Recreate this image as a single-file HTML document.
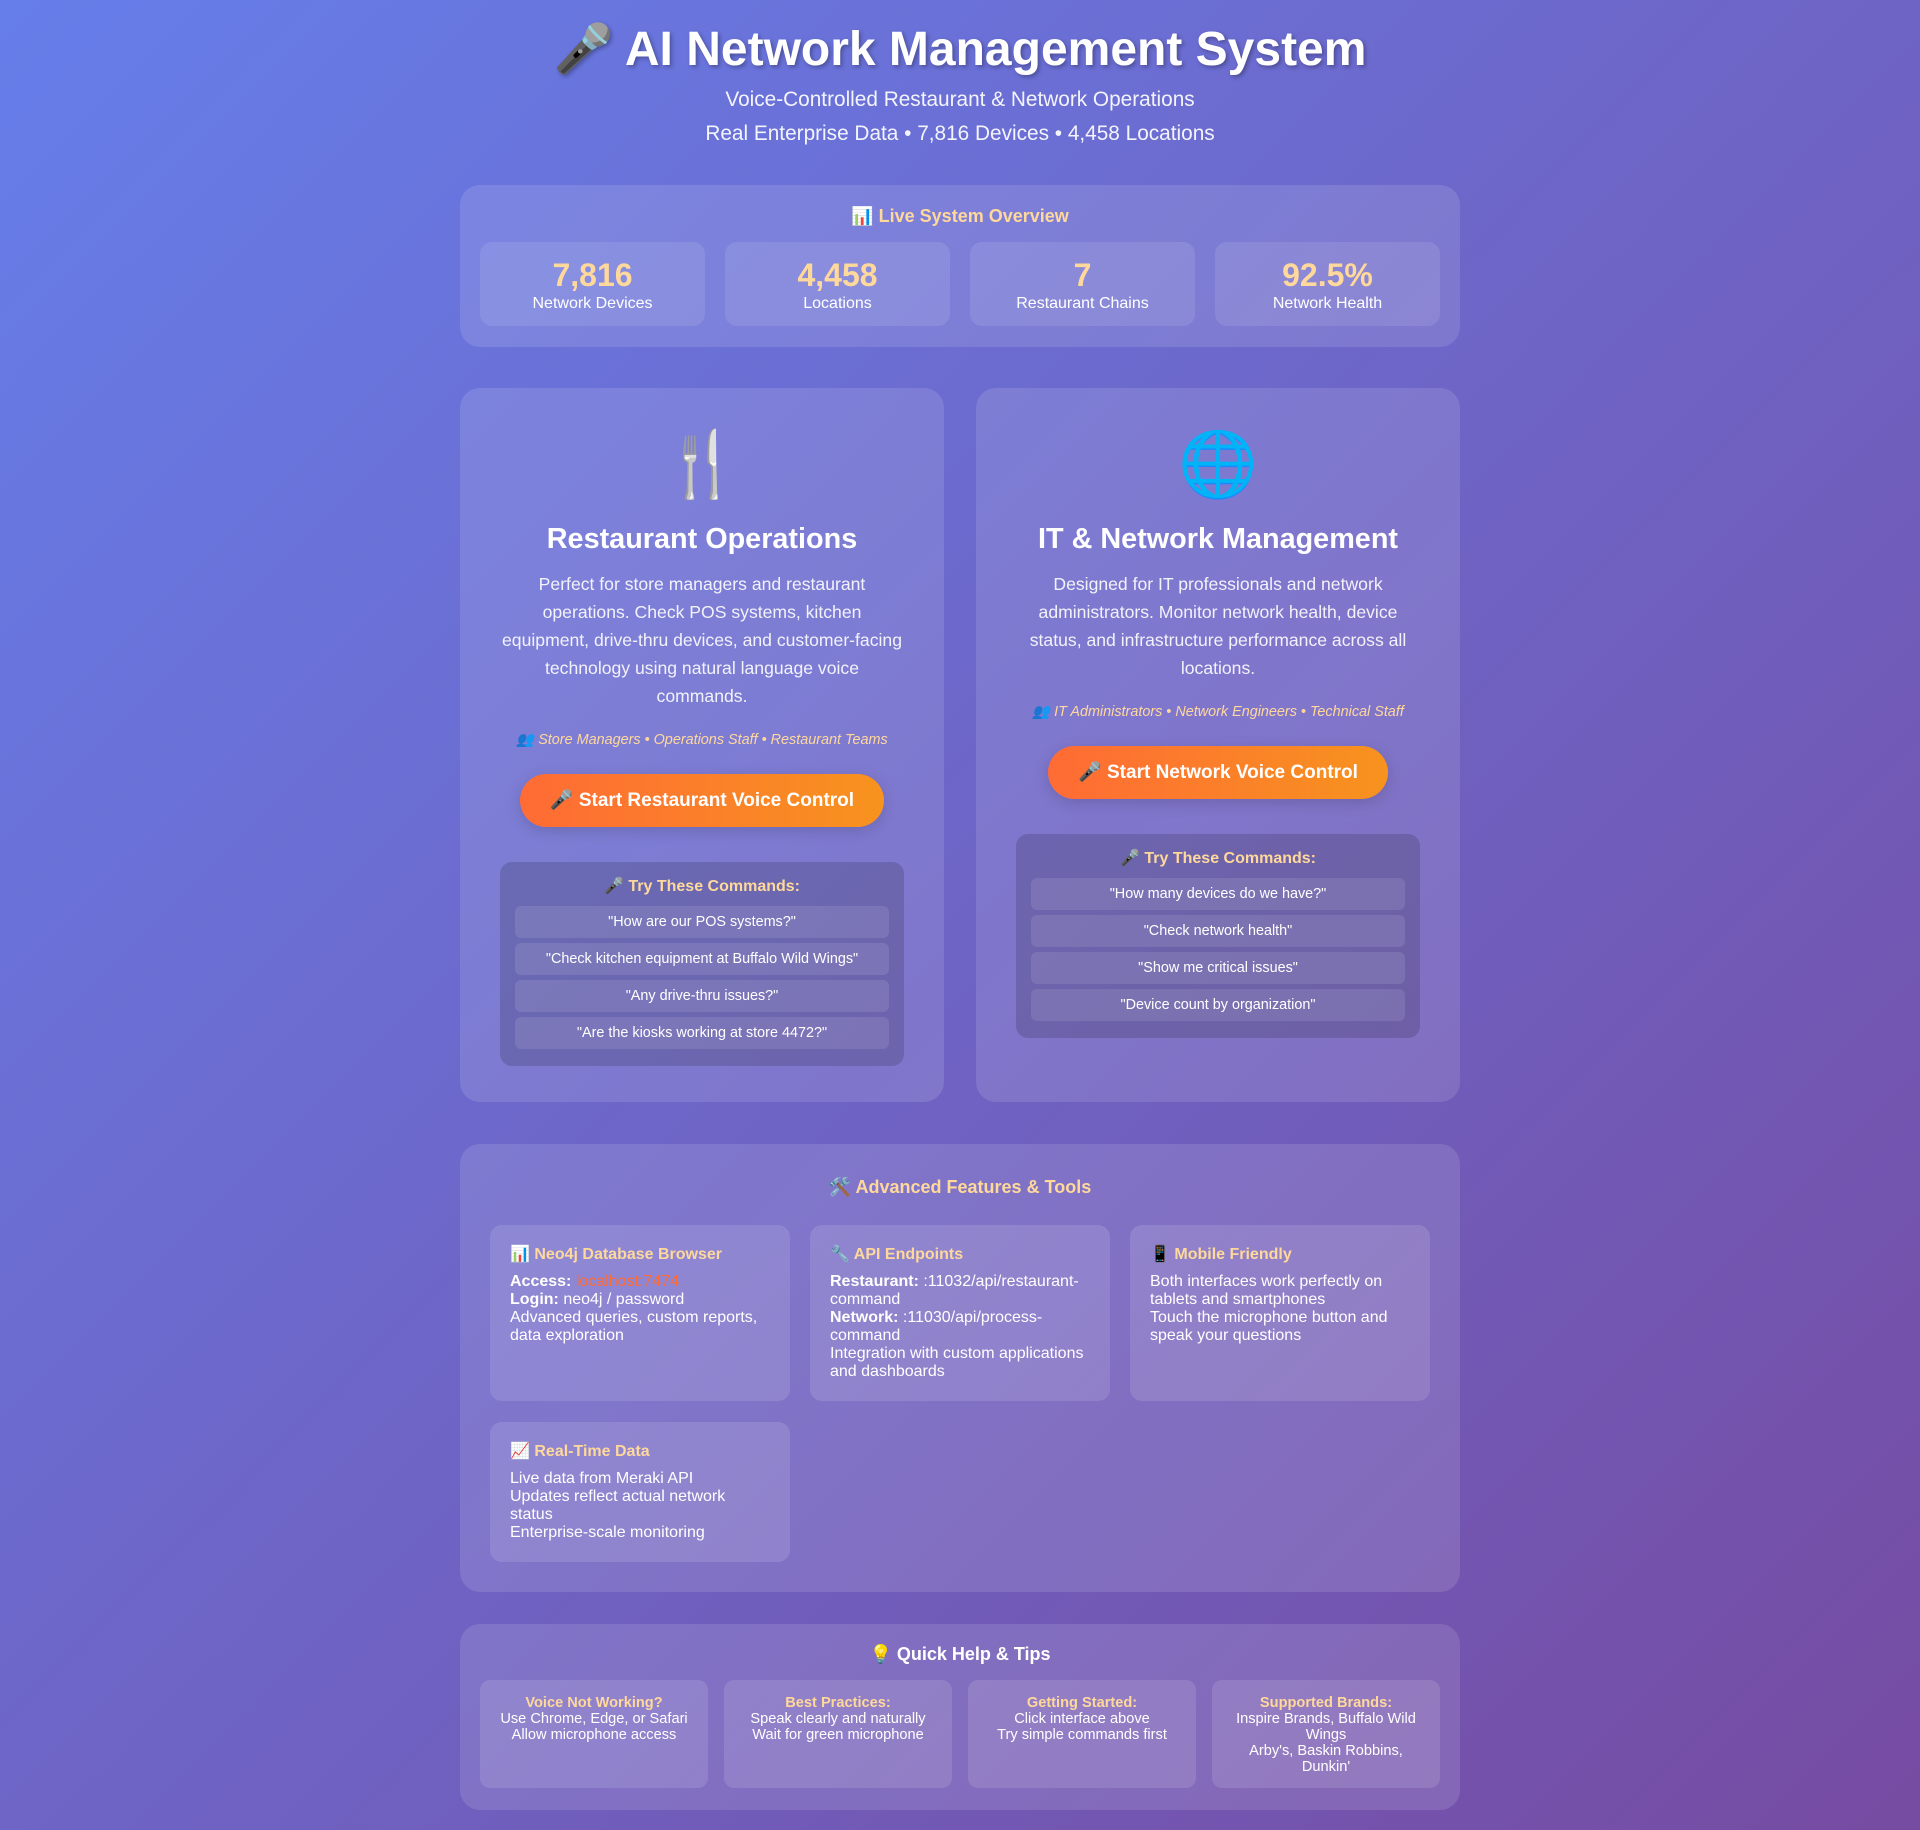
<!DOCTYPE html>
<html><head><meta charset="utf-8"><style>
*{box-sizing:border-box;margin:0;padding:0}
html,body{width:1920px;height:1830px;overflow:hidden}
body{font-family:"Liberation Sans",Arial,"Noto Sans CJK SC",sans-serif;color:#fff;background:linear-gradient(135deg,#667eea 0%,#764ba2 100%);}
.wrap{width:1000px;margin:0 auto;position:relative}
h1{position:absolute;top:21px;left:-200px;width:1400px;text-align:center;font-size:48px;line-height:58px;font-weight:bold;text-shadow:2px 2px 4px rgba(0,0,0,.3)}
.sub{position:absolute;left:0;width:1000px;text-align:center;font-size:20.8px;line-height:28px;color:rgba(255,255,255,.92)}
.ov{position:absolute;top:185px;left:0;width:1000px;height:162px;background:rgba(255,255,255,.12);border-radius:20px;padding:20px}
.ov h3{text-align:center;font-size:18px;line-height:22px;color:#ffd89b}
.stats{display:grid;grid-template-columns:repeat(4,1fr);gap:20px;margin-top:15px}
.st{height:84px;background:rgba(255,255,255,.1);border-radius:12px;text-align:center;padding-top:14px}
.st b{display:block;font-size:32px;line-height:38px;color:#ffd89b}
.st span{display:block;font-size:16px;line-height:19px}
.cards{position:absolute;top:388px;left:0;width:1000px;display:grid;grid-template-columns:1fr 1fr;gap:32px}
.card{height:714px;background:rgba(255,255,255,.12);border-radius:20px;padding:40px;text-align:center}
.ic{font-size:64px;line-height:74px;font-family:"Noto Color Emoji",sans-serif}
.card h2{font-size:28.8px;line-height:34px;margin-top:20px}
.card p.d{font-size:17.6px;line-height:28px;margin-top:14px;color:rgba(255,255,255,.9)}
.aud{font-size:14.4px;line-height:20px;font-style:italic;color:#ffd89b;margin-top:20px}
.btn{display:inline-block;margin-top:24px;height:53px;line-height:53px;padding:0 30px;border-radius:50px;background:linear-gradient(90deg,#ff6b35,#f7931e);font-size:19px;font-weight:bold;box-shadow:0 4px 15px rgba(0,0,0,.15)}
.cmd{margin:35px 0 0;background:rgba(0,0,0,.15);border-radius:12px;padding:15px 15px 12px}
.cmd h4{font-size:16px;line-height:20px;color:#ffd89b}
.cmd div{margin-top:9px}
.cmd div span{display:block;height:32px;line-height:32px;background:rgba(255,255,255,.1);border-radius:6px;font-size:14.4px;margin-bottom:5px}
.feat{position:absolute;top:1144px;left:0;width:1000px;height:448px;background:rgba(255,255,255,.12);border-radius:20px;padding:32px 30px}
.feat h3{text-align:center;font-size:18px;line-height:22px;color:#ffd89b}
.fg{display:grid;grid-template-columns:repeat(3,300px);gap:21px 20px;margin-top:27px}
.fb{background:rgba(255,255,255,.12);border-radius:12px;padding:21px 20px 20px;font-size:16px;line-height:18px}
.fb h5{font-size:16px;line-height:18px;color:#ffd89b;margin-bottom:9px}
.help{position:absolute;top:1624px;left:0;width:1000px;height:186px;background:rgba(255,255,255,.12);border-radius:20px;padding:19px 20px}
.help h3{text-align:center;font-size:18px;line-height:22px}
.hg{display:grid;grid-template-columns:repeat(4,1fr);gap:16px;margin-top:15px}
.hb{height:108px;background:rgba(255,255,255,.12);border-radius:10px;padding:15px 18px;text-align:center;font-size:14.6px;line-height:16px}
.hb b{color:#ffd89b}
</style></head><body><div class="wrap">
<h1>🎤 AI Network Management System</h1>
<div class="sub" style="top:86px">Voice-Controlled Restaurant &amp; Network Operations</div>
<div class="sub" style="top:120px">Real Enterprise Data • 7,816 Devices • 4,458 Locations</div>
<div class="ov"><h3>📊 Live System Overview</h3>
<div class="stats">
<div class="st"><b>7,816</b><span>Network Devices</span></div>
<div class="st"><b>4,458</b><span>Locations</span></div>
<div class="st"><b>7</b><span>Restaurant Chains</span></div>
<div class="st"><b>92.5%</b><span>Network Health</span></div>
</div></div>
<div class="cards">
<div class="card"><div class="ic">🍴</div><h2>Restaurant Operations</h2>
<p class="d">Perfect for store managers and restaurant operations. Check POS systems, kitchen equipment, drive-thru devices, and customer-facing technology using natural language voice commands.</p>
<div class="aud">👥 Store Managers • Operations Staff • Restaurant Teams</div>
<div class="btn">🎤 Start Restaurant Voice Control</div>
<div class="cmd"><h4>🎤 Try These Commands:</h4><div>
<span>"How are our POS systems?"</span><span>"Check kitchen equipment at Buffalo Wild Wings"</span><span>"Any drive-thru issues?"</span><span>"Are the kiosks working at store 4472?"</span></div></div></div>
<div class="card"><div class="ic">🌐</div><h2>IT &amp; Network Management</h2>
<p class="d">Designed for IT professionals and network administrators. Monitor network health, device status, and infrastructure performance across all locations.</p>
<div class="aud">👥 IT Administrators • Network Engineers • Technical Staff</div>
<div class="btn">🎤 Start Network Voice Control</div>
<div class="cmd"><h4>🎤 Try These Commands:</h4><div>
<span>"How many devices do we have?"</span><span>"Check network health"</span><span>"Show me critical issues"</span><span>"Device count by organization"</span></div></div></div>
</div>
<div class="feat"><h3>🛠️ Advanced Features &amp; Tools</h3>
<div class="fg">
<div class="fb"><h5>📊 Neo4j Database Browser</h5><b>Access:</b> <span style="color:#ff6b35">localhost:7474</span><br><b>Login:</b> neo4j / password<br>Advanced queries, custom reports, data exploration</div>
<div class="fb"><h5>🔧 API Endpoints</h5><b>Restaurant:</b> :11032/api/restaurant-command<br><b>Network:</b> :11030/api/process-command<br>Integration with custom applications and dashboards</div>
<div class="fb"><h5>📱 Mobile Friendly</h5>Both interfaces work perfectly on tablets and smartphones<br>Touch the microphone button and speak your questions</div>
<div class="fb"><h5>📈 Real-Time Data</h5>Live data from Meraki API<br>Updates reflect actual network status<br>Enterprise-scale monitoring</div>
</div></div>
<div class="help"><h3>💡 Quick Help &amp; Tips</h3>
<div class="hg">
<div class="hb"><b>Voice Not Working?</b><br>Use Chrome, Edge, or Safari<br>Allow microphone access</div>
<div class="hb"><b>Best Practices:</b><br>Speak clearly and naturally<br>Wait for green microphone</div>
<div class="hb"><b>Getting Started:</b><br>Click interface above<br>Try simple commands first</div>
<div class="hb"><b>Supported Brands:</b><br>Inspire Brands, Buffalo Wild Wings<br>Arby's, Baskin Robbins, Dunkin'</div>
</div></div>
</div></body></html>
